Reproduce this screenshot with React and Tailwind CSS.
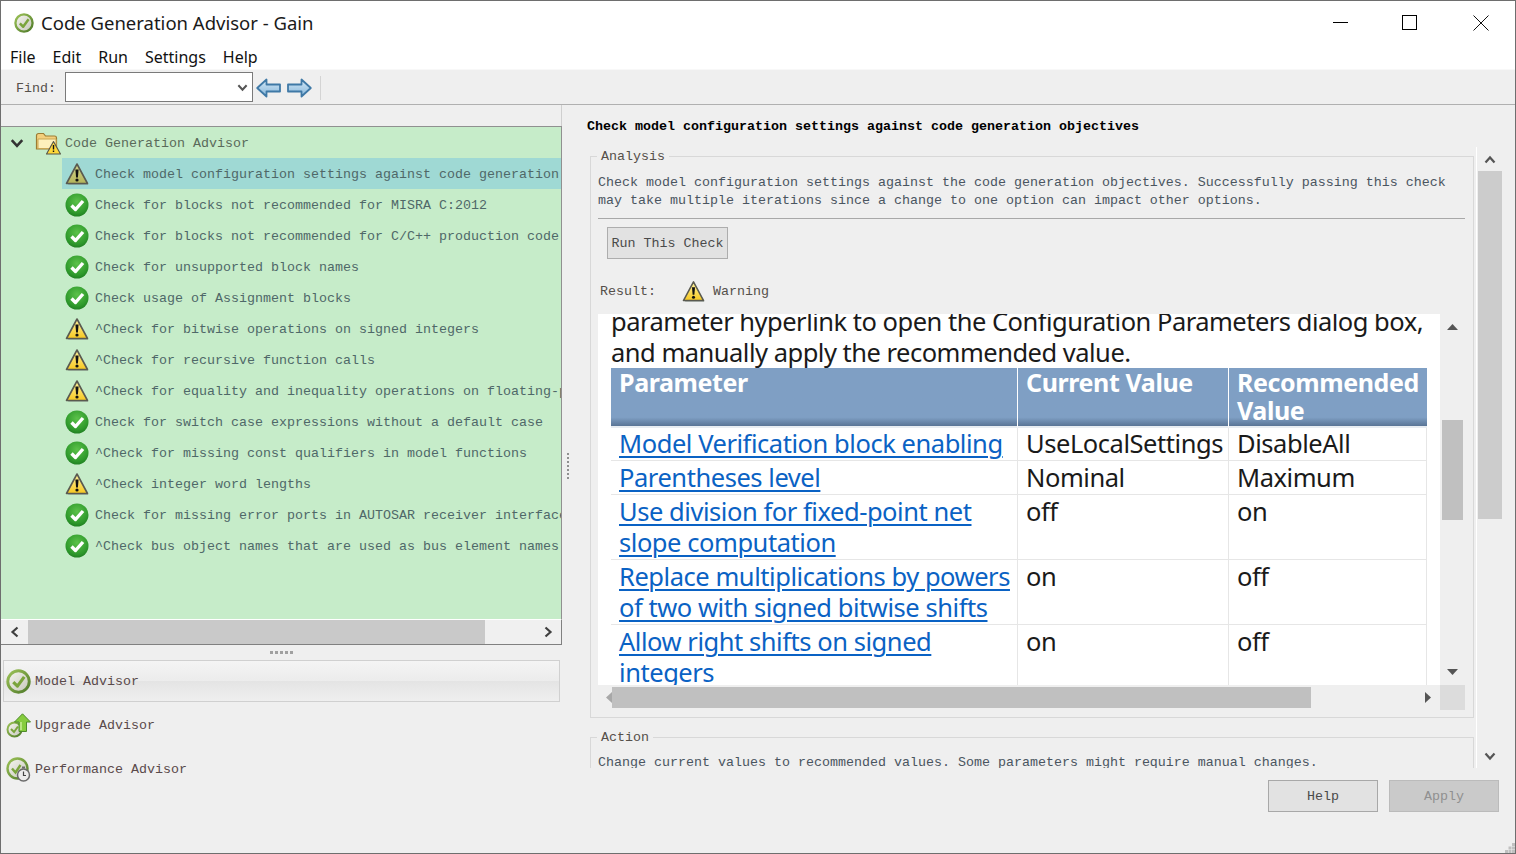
import React from "react";

const mono = "font-['Liberation_Mono',monospace] text-[13.33px] leading-[18px] relative top-[1px]";

function Warn({ size = 24, dim }) {
  return (
    <svg width={size} height={size} viewBox="0 0 24 24" className="shrink-0">
      <defs>
        <linearGradient id="wg" x1="0" y1="0" x2="0" y2="1">
          <stop offset="0" stopColor="#fff3a0" />
          <stop offset="1" stopColor="#f7c820" />
        </linearGradient>
        <linearGradient id="wd" x1="0" y1="0" x2="0" y2="1">
          <stop offset="0" stopColor="#d4d68e" />
          <stop offset="1" stopColor="#b4b45a" />
        </linearGradient>
      </defs>
      <path d="M13 4 23.500 23H3z" fill="#7a8a80" opacity=".45" />
      <path d="M12 2 22.500 21.500H1.500z" fill={dim ? "url(#wd)" : "url(#wg)"} stroke="#5a5a50" strokeWidth="1.600" strokeLinejoin="round" />
      <path d="M10.400 7.500h3.200l-.7 8h-1.800z" fill="#111" />
      <circle cx="12" cy="18" r="1.600" fill="#111" />
    </svg>
  );
}
function Ok({ size = 24 }) {
  return (
    <svg width={size} height={size} viewBox="0 0 24 24" className="shrink-0">
      <defs>
        <radialGradient id="og" cx=".5" cy=".35" r=".7">
          <stop offset="0" stopColor="#5cc24a" />
          <stop offset=".7" stopColor="#2f9a2c" />
          <stop offset="1" stopColor="#1d7a20" />
        </radialGradient>
      </defs>
      <circle cx="12" cy="12" r="11.500" fill="url(#og)" />
      <path d="M6.500 12.500 10.500 16.500 18 8" fill="none" stroke="#fff" strokeWidth="3.400" strokeLinejoin="round" />
    </svg>
  );
}
function RingDefs() {
  return (
    <defs>
      <linearGradient id="rg" x1="0" y1="0" x2="1" y2="1">
        <stop offset="0" stopColor="#9cc257" />
        <stop offset="1" stopColor="#4f7a2a" />
      </linearGradient>
      <linearGradient id="ri" x1="0" y1="0" x2="1" y2="1">
        <stop offset="0" stopColor="#f6f6f0" />
        <stop offset="1" stopColor="#c4c6b8" />
      </linearGradient>
    </defs>
  );
}
function Ring({ size = 20 }) {
  return (
    <svg width={size} height={size} viewBox="0 0 24 24" className="shrink-0">
      <RingDefs />
      <circle cx="12" cy="12" r="10.300" fill="url(#ri)" stroke="url(#rg)" strokeWidth="2.800" />
      <path d="M7 12.500 11 16.500 17.500 7.500" fill="none" stroke="#7aa43c" strokeWidth="3" strokeLinejoin="round" />
    </svg>
  );
}
function Upgrade() {
  return (
    <svg width={25} height={25} viewBox="0 0 25 25" className="shrink-0">
      <RingDefs />
      <circle cx="8.500" cy="16.500" r="7" fill="url(#ri)" stroke="url(#rg)" strokeWidth="2" />
      <path d="M5 16 8 19 12 13.500" fill="none" stroke="#7aa43c" strokeWidth="2" />
      <path d="M16.500 .8 24.500 9H20.500V18.500H13V9H8.500z" fill="#86cc3e" stroke="#4d8a2a" strokeWidth="1" />
      <path d="M15 9V17" stroke="#c8ec98" strokeWidth="1.500" />
    </svg>
  );
}
function Perf() {
  return (
    <svg width={25} height={25} viewBox="0 0 25 25" className="shrink-0">
      <RingDefs />
      <circle cx="11.500" cy="11.500" r="10" fill="url(#ri)" stroke="url(#rg)" strokeWidth="2.400" />
      <path d="M6 11.500 9.500 15.500 14.500 8" fill="none" stroke="#7aa43c" strokeWidth="2.400" />
      <circle cx="17.500" cy="18" r="6" fill="#ececec" stroke="#6a6a6a" strokeWidth="1.500" />
      <path d="M17.500 14.500v4h2.500" fill="none" stroke="#444" strokeWidth="1.200" />
      <rect x="16" y="9.500" width="3" height="2" fill="#6a6a6a" />
    </svg>
  );
}
function Folder() {
  return (
    <svg width={26} height={24} viewBox="0 0 26 24" className="shrink-0">
      <path d="M1.500 4.500a2 2 0 0 1 2-2h5l2 2.500h9a2 2 0 0 1 2 2V18H1.500z" fill="#f3cf7c" stroke="#9c7c34" strokeWidth="1.200" />
      <path d="M3 8h18v9.500H3z" fill="#fdf0bc" stroke="#c9a653" strokeWidth="1" />
      <path d="M18.500 10.500 25.500 23H11.500z" fill="#ffd83a" stroke="#55554a" strokeWidth="1.100" strokeLinejoin="round" />
      <path d="M17.800 14h1.400v4.500h-1.400zM17.800 19.500h1.400V21h-1.400z" fill="#111" />
    </svg>
  );
}
function Arrow({ flip }) {
  return (
    <svg width={25} height={20} viewBox="0 0 25 20" className={flip ? "shrink-0 -scale-x-100" : "shrink-0"}>
      <defs>
        <linearGradient id="ag" x1="0" y1="0" x2="0" y2="1">
          <stop offset="0" stopColor="#d4e8f6" />
          <stop offset="1" stopColor="#86b6da" />
        </linearGradient>
      </defs>
      <path d="M1.200 10 10.500 1.500V6.500H24V13.500H10.500V18.500z" fill="url(#ag)" stroke="#3f79a6" strokeWidth="1.800" strokeLinejoin="round" />
    </svg>
  );
}
function Chevron({ dir = "left", color = "#404040", size = 12 }) {
  const d = {
    left: "M8.500 1.500 3.500 6l5 4.500",
    right: "M3.500 1.500 8.500 6l-5 4.500",
    up: "M1.500 8.500 6 3.500l4.500 5",
    down: "M1.500 3.500 6 8.500l4.500-5",
  }[dir];
  return (
    <svg width={size} height={size} viewBox="0 0 12 12" className="shrink-0">
      <path d={d} fill="none" stroke={color} strokeWidth="2.200" />
    </svg>
  );
}
function Tri({ dir, color = "#555" }) {
  const d = { up: "M0 6 5.500 0 11 6z", down: "M0 0h11L5.500 6z", left: "M6 0v11L0 5.500z", right: "M0 0v11l6-5.500z" }[dir];
  const v = dir === "up" || dir === "down";
  return (
    <svg width={v ? 11 : 6} height={v ? 6 : 11} viewBox={v ? "0 0 11 6" : "0 0 6 11"} className="shrink-0">
      <path d={d} fill={color} />
    </svg>
  );
}

const checks = [
  ["w", "Check model configuration settings against code generation objectives", true],
  ["o", "Check for blocks not recommended for MISRA C:2012"],
  ["o", "Check for blocks not recommended for C/C++ production code deployment"],
  ["o", "Check for unsupported block names"],
  ["o", "Check usage of Assignment blocks"],
  ["w", "^Check for bitwise operations on signed integers"],
  ["w", "^Check for recursive function calls"],
  ["w", "^Check for equality and inequality operations on floating-point values"],
  ["o", "Check for switch case expressions without a default case"],
  ["o", "^Check for missing const qualifiers in model functions"],
  ["w", "^Check integer word lengths"],
  ["o", "Check for missing error ports in AUTOSAR receiver interfaces"],
  ["o", "^Check bus object names that are used as bus element names"],
];

const rows = [
  [["Model Verification block enabling"], "UseLocalSettings", "DisableAll", "h-[33px]", ""],
  [["Parentheses level"], "Nominal", "Maximum", "h-[34px]", "pt-[1px]"],
  [["Use division for fixed-point net", "slope computation"], "off", "on", "h-[65px]", "pt-[1px]"],
  [["Replace multiplications by powers", "of two with signed bitwise shifts"], "on", "off", "h-[65px]", "pt-[1px]"],
  [["Allow right shifts on signed", "integers"], "on", "off", "h-[65px]", "pt-[1px]"],
];

function Advisor({ icon, label, active }) {
  return (
    <div className={`flex items-center ml-[2px] w-[557px] ${active ? "h-[42px] mb-[1px] border border-[#d0d0d0] bg-[linear-gradient(#f4f4f4,#ececec_49%,#e4e4e4_50%,#efefef)]" : "h-[44px]"}`}>
      <div className={`${active ? "w-[31px] pl-[2px]" : "w-[32px] pl-[3px]"} flex shrink-0`}>{icon}</div>
      <span className={`${mono} text-[#5a4a4a]`}>{label}</span>
    </div>
  );
}

export default function App() {
  const seg = "font-['Noto_Sans','Open_Sans',sans-serif]";
  return (
    <div className="w-[1516px] h-[854px] border border-[#6e6e6e] bg-[#efefef] flex flex-col overflow-hidden">
      {/* title bar */}
      <div className="h-[43px] bg-white flex items-center shrink-0">
        <div className="ml-[13px] w-[20px]"><Ring size={20} /></div>
        <span className={`${seg} ml-[7px] text-[18.5px] text-[#1a1a1a]`}>Code Generation Advisor - Gain</span>
        <div className="ml-auto flex items-center h-full">
          <div className="w-[15px] h-[1px] bg-black mr-[54px]" />
          <div className="w-[15px] h-[15px] border border-black mr-[56px]" />
          <svg width="16" height="16" viewBox="0 0 16 16" className="mr-[26px]"><path d="M.5.5l15 15M15.500.5l-15 15" stroke="#111" strokeWidth="1" /></svg>
        </div>
      </div>
      {/* menu */}
      <div className={`${seg} h-[26px] bg-white flex items-center gap-[17px] pl-[9px] text-[16px] text-[#111] border-b border-[#f8f8f8] shrink-0`}>
        <span>File</span><span>Edit</span><span>Run</span><span>Settings</span><span>Help</span>
      </div>
      {/* toolbar */}
      <div className="h-[34px] flex items-center border-b border-[#b0b0b0] shrink-0 mt-[1px]">
        <span className={`${mono} text-[#55504a] ml-[15px]`}>Find:</span>
        <div className="ml-[9px] w-[188px] h-[30px] bg-white border border-[#7a7a7a] flex items-center justify-end pr-[4px] mb-[1px]">
          <Chevron dir="down" color="#555" size={11} />
        </div>
        <div className="ml-[3px]"><Arrow /></div>
        <div className="ml-[6px]"><Arrow flip /></div>
        <div className="ml-[8px] w-[1px] h-[24px] bg-[#d4d4d4]" />
      </div>
      {/* body */}
      <div className="flex-1 flex min-h-0">
        {/* left */}
        <div className="w-[561px] flex flex-col shrink-0">
          <div className="h-[21px] shrink-0 border-r border-[#cfcfcf]" />
          <div className="h-[493px] shrink-0 border-t border-r border-[#909090] bg-[#c6ecc9] overflow-hidden">
            <div className="h-[31px] flex items-center">
              <div className="ml-[9px] w-[16px]"><Chevron dir="down" color="#333" size={14} /></div>
              <div className="ml-[9px]"><Folder /></div>
              <span className={`${mono} ml-[4px] text-[#5a6a5a]`}>Code Generation Advisor</span>
            </div>
            {checks.map(([k, t, sel], i) => (
              <div key={i} className={`h-[31px] ml-[61px] flex items-center whitespace-nowrap overflow-hidden ${sel ? "bg-[#9fd9d4]" : ""}`}>
                <div className="ml-[3px] w-[24px]">{k === "w" ? <Warn dim={sel} /> : <Ok />}</div>
                <span className={`${mono} ml-[6px] text-[#4f6868]`}>{t}</span>
              </div>
            ))}
          </div>
          <div className="h-[26px] shrink-0 border-t border-white border-b-[1.5px] border-b-[#808080] border-r border-r-[#808080] flex items-center bg-[#f0f0f0]">
            <div className="w-[27px] flex justify-center"><Chevron dir="left" /></div>
            <div className="w-[457px] h-full bg-[#c9c9c9]" />
            <div className="flex-1 flex justify-end pr-[7px]"><Chevron dir="right" /></div>
          </div>
          <div className="h-[15px] flex items-center justify-center shrink-0 gap-[2px]">
            {[0, 1, 2, 3, 4].map((i) => <div key={i} className="w-[3px] h-[3px] bg-[#a0a0a0]" />)}
          </div>
          <Advisor icon={<Ring size={25} />} label="Model Advisor" active />
          <Advisor icon={<Upgrade />} label="Upgrade Advisor" />
          <Advisor icon={<Perf />} label="Performance Advisor" />
        </div>
        {/* right */}
        <div className="flex-1 flex flex-col min-w-0 relative">
          <div className={`${mono} h-[42px] shrink-0 pl-[25px] pt-[12px] font-bold text-black`}>Check model configuration settings against code generation objectives</div>
          <div className="h-[621px] shrink-0 flex">
            <div className="w-[915px] border-r border-white overflow-hidden pl-[28px] relative">
              <div className="absolute left-[5px] top-[306px] flex flex-col gap-[2px]">
                {[0, 1, 2, 3, 4, 5, 6].map((i) => <div key={i} className="w-[2px] h-[2px] bg-[#909090]" />)}
              </div>
              <fieldset className="w-[884px] border border-[#d8d8d8] pl-[7px] pr-[8px] pb-[7px]">
                <legend className={`${mono} -ml-[1px] px-[4px] text-[#55504a]`}>Analysis</legend>
                <div className={`${mono} pt-[8px] h-[44px] text-[#4a5560] whitespace-nowrap`}>
                  Check model configuration settings against the code generation objectives. Successfully passing this check<br />
                  may take multiple iterations since a change to one option can impact other options.
                </div>
                <div className="h-[1px] bg-[#a8a8a8] mt-[9px]" />
                <div className="mt-[8px] ml-[9px] w-[121px] h-[32px] bg-[#e2e2e2] border border-[#adadad] flex items-center justify-center">
                  <span className={`${mono} text-[#4a4a4a]`}>Run This Check</span>
                </div>
                <div className="mt-[20px] h-[24px] flex items-center pl-[2px]">
                  <span className={`${mono} text-[#55504a] w-[82px]`}>Result:</span>
                  <Warn size={23} />
                  <span className={`${mono} ml-[8px] text-[#55504a]`}>Warning</span>
                </div>
                <div className="mt-[11px] w-[867px] h-[396px] flex flex-wrap">
                  <div className={`${seg} w-[842px] h-[371px] bg-white overflow-hidden text-[#1a1a1a] text-[25.5px] leading-[31px] tracking-[-0.45px]`}>
                    <div className="-mt-[8px] pl-[13px] whitespace-nowrap tracking-[-0.5px]">
                      parameter hyperlink to open the Configuration Parameters dialog box,<br />
                      and manually apply the recommended value.
                    </div>
                    <table className="ml-[13px] w-[816px] table-fixed border-separate border-spacing-0">
                      <colgroup>
                        <col className="w-[407px]" /><col className="w-[211px]" /><col className="w-[198px]" />
                      </colgroup>
                      <thead>
                        <tr>
                          {[["Parameter"], ["Current Value"], ["Recommended", "Value"]].map((h, i) => (
                            <th key={i} className={`h-[60px] text-left align-top font-bold text-white text-[25px] leading-[28px] pl-[8px] border-b-[2px] border-b-[#e8edf2] bg-gradient-to-b from-[#7f9fc4] from-85% to-[#5a7596] tracking-[-0.4px] ${i < 2 ? "border-r border-r-white" : ""}`}>
                              {h.map((x, j) => <div key={j}>{x}</div>)}
                            </th>
                          ))}
                        </tr>
                      </thead>
                      <tbody>
                        {rows.map(([p, c, r, h, top], i) => (
                          <tr key={i} className={h}>
                            <td className={`align-top pl-[8px] border-b border-r border-[#e6e6e6] whitespace-nowrap ${top}`}>
                              {p.map((x, j) => <div key={j}><span className="text-[#0a62c4] underline underline-offset-[3px] decoration-[1.5px]">{x}</span></div>)}
                            </td>
                            <td className={`align-top pl-[8px] border-b border-r border-[#e6e6e6] whitespace-nowrap ${top}`}>{c}</td>
                            <td className={`align-top pl-[8px] border-b border-r border-[#e6e6e6] whitespace-nowrap ${top}`}>{r}</td>
                          </tr>
                        ))}
                      </tbody>
                    </table>
                  </div>
                  <div className="w-[25px] h-[371px] flex flex-col items-start pt-[10px]">
                    <div className="ml-[7px]"><Tri dir="up" /></div>
                    <div className="w-[21px] h-[100px] ml-[2px] mt-[90px] bg-[#c0c0c0] shrink-0" />
                    <div className="ml-[7px] mt-[149px]"><Tri dir="down" /></div>
                  </div>
                  <div className="w-[842px] h-[25px] flex items-center">
                    <div className="w-[14px] pl-[8px]"><Tri dir="left" color="#a8a8a8" /></div>
                    <div className="w-[699px] h-[21px] bg-[#c0c0c0]" />
                    <div className="ml-[114px]"><Tri dir="right" /></div>
                  </div>
                  <div className="w-[25px] h-[25px] bg-[#dcdcdc]" />
                </div>
              </fieldset>
              <fieldset className="mt-[10px] w-[884px] border border-[#d8d8d8] pl-[7px] pr-[8px] pb-[7px]">
                <legend className={`${mono} -ml-[1px] px-[4px] text-[#55504a]`}>Action</legend>
                <div className={`${mono} pt-[7px] text-[#4a5560] whitespace-nowrap`}>Change current values to recommended values. Some parameters might require manual changes.</div>
              </fieldset>
            </div>
            <div className="w-[25px] flex flex-col items-center pt-[7px]">
              <Chevron dir="up" color="#555" />
              <div className="w-[24px] h-[348px] bg-[#cccccc] mt-[5px] shrink-0" />
              <div className="mt-[231px]"><Chevron dir="down" color="#555" /></div>
            </div>
          </div>
          <div className="mt-[12px] pl-[706px] flex gap-[11px]">
            <div className="w-[110px] h-[32px] bg-[#e2e2e2] border border-[#a8a8a8] flex items-center justify-center">
              <span className={`${mono} text-[#4a4a4a]`}>Help</span>
            </div>
            <div className="w-[110px] h-[32px] bg-[#cacaca] border border-[#bbbbbb] flex items-center justify-center">
              <span className={`${mono} text-[#909090]`}>Apply</span>
            </div>
          </div>
          <svg width="10" height="10" viewBox="0 0 10 10" className="absolute right-0 bottom-0">
            <path d="M7 0h3v3H7zM3.500 3.500h3v3h-3zM7 3.500h3v3H7zM0 7h3v3H0zM3.500 7h3v3h-3zM7 7h3v3H7z" fill="#c0c0c0" />
          </svg>
        </div>
      </div>
    </div>
  );
}
